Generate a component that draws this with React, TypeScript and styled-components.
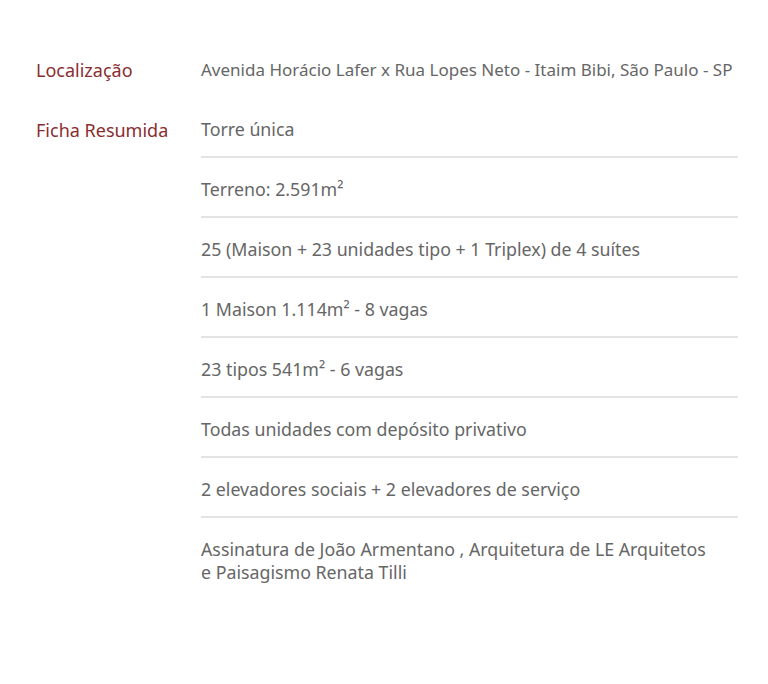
import React from "react";
import styled, { createGlobalStyle } from "styled-components";

const GlobalStyle = createGlobalStyle`
    html, body {
        margin: 0;
        padding: 0;
        background: #ffffff;
    }
    body {
        font-family: "Noto Sans", "Open Sans", Arial, sans-serif;
        -webkit-font-smoothing: antialiased;
    }
`;

const Page = styled.div`
    padding: 58px 30px 40px 36px;
`;

const Section = styled.div`
    display: grid;
    grid-template-columns: 165px 537px;
    row-gap: 36px;
`;

const Label = styled.div`
    color: #8a2d30;
    font-size: 18px;
    line-height: 24px;
`;

const Value = styled.div`
    color: #666666;
    font-size: 17px;
    line-height: 24px;
    white-space: nowrap;
`;

const List = styled.ul`
    list-style: none;
    margin: 0;
    padding: 0;
`;

const Item = styled.li<{ last?: boolean }>`
    color: #666666;
    font-size: 17.8px;
    line-height: 23px;
    padding: ${p => (p.last ? "20px 0 0" : "0 0 15px")};
    border-bottom: ${p => (p.last ? "none" : "2px solid #e3e3e3")};
    & + & {
        padding-top: 20px;
    }
`;

const ficha: React.ReactNode[] = [
    "Torre única",
    "Terreno: 2.591m²",
    "25 (Maison + 23 unidades tipo + 1 Triplex) de 4 suítes",
    "1 Maison 1.114m² - 8 vagas",
    "23 tipos 541m² - 6 vagas",
    "Todas unidades com depósito privativo",
    "2 elevadores sociais + 2 elevadores de serviço",
    <>
        Assinatura de João Armentano , Arquitetura de LE Arquitetos
        <br />e Paisagismo Renata Tilli
    </>,
];

export default function App() {
    return (
        <>
            <GlobalStyle />
            <Page>
                <Section>
                    <Label>Localização</Label>
                    <Value>Avenida Horácio Lafer x Rua Lopes Neto - Itaim Bibi, São Paulo - SP</Value>
                    <Label>Ficha Resumida</Label>
                    <List>
                        {ficha.map((line, i) => (
                            <Item key={i} last={i === ficha.length - 1}>
                                {line}
                            </Item>
                        ))}
                    </List>
                </Section>
            </Page>
        </>
    );
}
